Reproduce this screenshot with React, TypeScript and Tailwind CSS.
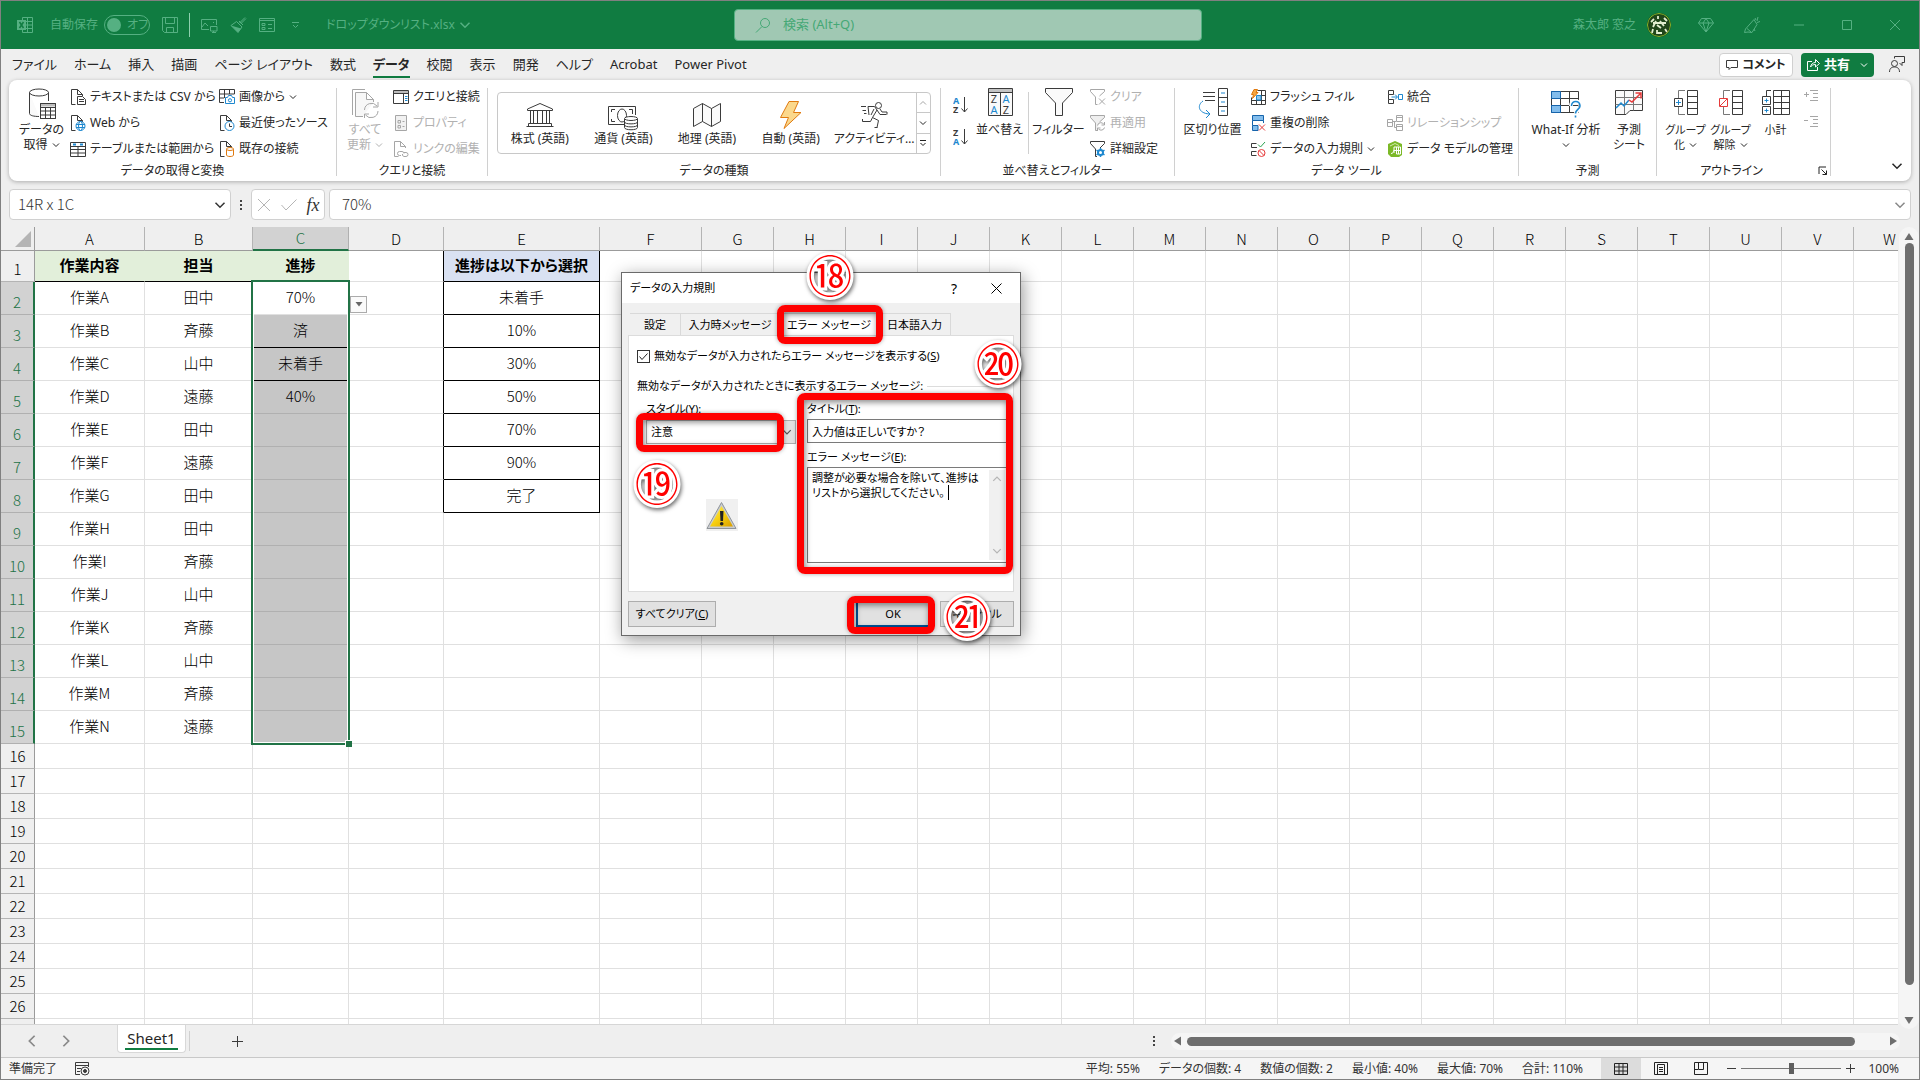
import React, { useState } from "react";
import clsx from "clsx";

const INK = "#3b3b3b";
const BLUE = "#1e88cf";
const GRAY = "#a6a6a6";

const Svg = ({ w, h, children, className }: { w: number; h: number; children: React.ReactNode; className?: string }) => (
  <svg width={w} height={h} viewBox={`0 0 ${w} ${h}`} fill="none" stroke={INK} className={clsx("shrink-0", className)} aria-hidden="true">
    {children}
  </svg>
);

const Chevron = ({ className, size = 8 }: { className?: string; size?: number }) => (
  <svg width={size} height={size} viewBox="0 0 8 8" fill="none" stroke="currentColor" className={clsx("shrink-0", className)} aria-hidden="true">
    <path d="M1 2.5 4 5.5 7 2.5" />
  </svg>
);

const Doc = ({ color = INK }: { color?: string }) => (
  <path d="M5.5 15.5H1.5V.5H7.5L12.5 5.5V7M7.5 .5V5.5H12.5" stroke={color} />
);

const icons: Record<string, React.ReactNode> = {
  csv: (
    <>
      <Doc />
      <path d="M7.5 7.5H12.5L15.5 10.5V15.5H7.5Z" fill="#fff" />
      <path d="M9 10.5H14M9 12.5H14" />
    </>
  ),
  web: (
    <>
      <Doc />
      <circle cx="10.5" cy="11" r="4.5" fill="#fff" stroke={BLUE} />
      <path d="M6 9.5H15M6 12.5H15" stroke={BLUE} />
      <ellipse cx="10.5" cy="11" rx="2" ry="4.5" stroke={BLUE} />
    </>
  ),
  table: (
    <>
      <path d="M.5 1.5H15.5V15.5H.5ZM.5 5.5H15.5M.5 8.5H15.5M.5 12H15.5M8 5.5V15.5" />
      <path d="M3 3.5H6M10 3.5H13" stroke={BLUE} strokeWidth="2" />
    </>
  ),
  picture: (
    <>
      <path d="M.5 .5H15.5V5M.5 .5V13.5H5M.5 5H15.5M.5 9H5M5.5 .5V9M10.5 .5V5" />
      <path d="M6.5 8.5H8.5L9.5 6.5H12.5L13.5 8.5H15.5V14.5H6.5Z" fill="#fff" stroke={BLUE} />
      <circle cx="11" cy="11.3" r="1.6" stroke={BLUE} />
    </>
  ),
  recent: (
    <>
      <Doc />
      <circle cx="10.5" cy="11" r="4.5" fill="#fff" stroke={BLUE} />
      <path d="M10.5 8.5V11.5H13" />
    </>
  ),
  existing: (
    <>
      <Doc />
      <path d="M7.5 8V14C7.5 16 14.5 16 14.5 14V8" fill="#fff" stroke="#e07a10" />
      <ellipse cx="11" cy="8" rx="3.5" ry="1.5" fill="#fff" stroke="#e07a10" />
    </>
  ),
  queries: (
    <>
      <path d="M.5 1.5H15.5V14.5H.5ZM.5 4.5H15.5" />
      <path d="M1 3H15" stroke="#bbb" strokeWidth="2" />
      <path d="M10.5 5V14" />
      <path d="M12 7.5H14.5M12 9.5H14.5M12 11.5H14.5" stroke={BLUE} />
    </>
  ),
  props: (
    <>
      <path d="M2.5 .5H13.5V15.5H2.5Z" fill="#f1f1f1" stroke={GRAY} />
      <path d="M5 5.5H7.5V8H5ZM5 10.5H7.5V13H5Z M9.5 6.5H11.5M9.5 11.5H11.5" stroke={GRAY} />
    </>
  ),
  links: (
    <>
      <Doc color={GRAY} />
      <path d="M8 14.5H6.5A2 2 0 0 1 6.5 10.5H9A2 2 0 0 1 11 12.5M11 11.5H13A2 2 0 0 1 13 15.5H11A2 2 0 0 1 9.500 13" stroke={GRAY} />
    </>
  ),
  clear: <path d="M9.500 7 14.500 2.500V.5H.5V2.500L5.500 8V15.500H7.500M9 9.500 15 15.500M15 9.500 9 15.500" stroke={GRAY} />,
  reapply: (
    <>
      <path d="M9.500 7 14.500 2.500V.5H.5V2.500L5.500 8V15.500H7" stroke={GRAY} fill="#efefef" />
      <path d="M7.500 10.500A3.500 3.500 0 0 1 14 9.500M14.500 7V10H11.500M14.500 12.500A3.500 3.500 0 0 1 8.500 14M7.500 16V13H10.500" stroke={GRAY} />
    </>
  ),
  advanced: (
    <>
      <path d="M10 7 14.500 2.500V.5H.5V2.500L5.500 8V15.500H7" />
      <circle cx="10.500" cy="11.500" r="2.500" stroke={BLUE} strokeWidth="2" />
      <path d="M10.500 7V9M10.500 14V16M6.500 9.200 8.500 10.300M12.500 12.700 14.500 13.800M14.500 9.200 12.500 10.300M8.500 12.700 6.500 13.800" stroke={BLUE} strokeWidth="1.500" />
    </>
  ),
  flash: (
    <>
      <path d="M7.500 1.500H15.500V15.500H1.500V8.500M1.500 11.500H15.500M11.500 1.500V15.500M6.500 8V15.500M7 6.500H15.500" />
      <path d="M6.500 6.500H11V11H6.500Z" stroke={BLUE} fill="#8fc6ee" />
      <path d="M4 .5H7.500L6 3.500H8L2.500 9.500 3.500 5.500H1.500Z" fill="#f5a742" stroke="#e07a10" />
    </>
  ),
  dedupe: (
    <>
      <path d="M2.500 .5H13.500V5.500H2.500ZM2.500 10.500H8V15.500H2.500Z" fill="#83bdec" stroke="#1664ab" />
      <path d="M2.500 5.500V10.500M13.500 5.500V8" stroke="#1664ab" />
      <path d="M9 9.500 15 15.500M15 9.500 9 15.500" stroke="#e63a3a" />
    </>
  ),
  validate: (
    <>
      <path d="M6.500 2.500H1.500V6.500H7M6.500 10.500H1.500V14.500H6.500" />
      <path d="M8 3.500 10.500 6 15 1" stroke="#2ca350" />
      <circle cx="11.500" cy="12" r="3.500" stroke="#e63a3a" />
      <path d="M9 9.500 14 14.500" stroke="#e63a3a" />
    </>
  ),
  consolidate: (
    <>
      <path d="M1.500 1.500H6.500V5.500H1.500ZM1.500 10.500H6.500V14.500H1.500ZM1.500 5.500V10.500" />
      <path d="M4.500 8H10M8 5.500 10.500 8 8 10.500M11.500 5.500H15.500V10.500H11.500Z" stroke={BLUE} />
    </>
  ),
  relation: <path d="M.5 4.500H5.500V11.500H.5ZM.5 7.500H5.500M9.500 .5H15.500V6.500H9.500ZM9.500 2.500H15.500M9.500 9.500H15.500V15.500H9.500ZM9.500 11.500H15.500M5.500 6.500H9M7.500 6.500V12.500H9" stroke={GRAY} />,
  model: (
    <>
      <path d="M1 3 8 0 15 3V14L12 16H4L1 13Z" fill="#7cb928" stroke="none" />
      <path d="M7 12V6H13.500V13H9.500M9.500 6V13M11.500 6V13M7 9.500H13.500M4 12.500C6 12.500 6.500 11 6.500 9.500" stroke="#fff" />
      <path d="M3 5 8 2.500 12 4.500" stroke="#d3ecae" />
    </>
  ),
};

const SmallIcon = ({ name }: { name: string }) => (
  <Svg w={16} h={16}>
    {icons[name]}
  </Svg>
);

const SmallButton = ({ icon, text, disabled, chevron }: { icon: string; text: string; disabled?: boolean; chevron?: boolean }) => (
  <button type="button" disabled={disabled} className={clsx("flex h-[26px] items-center gap-1 whitespace-nowrap", disabled && "text-[#b1b1b1]")}>
    <SmallIcon name={icon} />
    <span>{text}</span>
    {chevron && <Chevron />}
  </button>
);

const BigButton = ({ icon, lines, chevron, disabled, className }: { icon: React.ReactNode; lines: string[]; chevron?: boolean; disabled?: boolean; className: string }) => (
  <button type="button" disabled={disabled} className={clsx("flex shrink-0 flex-col items-center pt-1 leading-[15px]", className, disabled && "text-[#b1b1b1]")}>
    <span className="mb-0.5 flex h-8 items-start">{icon}</span>
    {lines.map((line, i) => (
      <span key={line} className="flex items-center gap-1 whitespace-nowrap">
        {line}
        {chevron && i === lines.length - 1 && lines.length > 1 && <Chevron />}
      </span>
    ))}
    {chevron && lines.length === 1 && <Chevron className="mt-1" />}
  </button>
);

const Group = ({ label, className, children, launcher }: { label: string; className: string; children: React.ReactNode; launcher?: boolean }) => (
  <>
    <section aria-label={label} className={clsx("flex shrink-0 flex-col", className)}>
      <div className="flex h-[78px]">{children}</div>
      <div className="flex h-[18px] items-center">
        {launcher && <span className="w-3" />}
        <span className={clsx("flex-1 text-center", launcher && "-ml-6")}>{label}</span>
        {launcher && (
          <button type="button" aria-label="アウトラインの設定" className="pr-0.5">
            <Svg w={10} h={10}>
              <path d="M1 8V1H8M3.500 3.500 8.500 8.500M8.500 4.500V8.500H4.500" stroke="#222" />
            </Svg>
          </button>
        )}
      </div>
    </section>
    <div className="my-1 w-px shrink-0 bg-[#d0d0d0]" />
  </>
);

const DataGetIcon = () => (
  <Svg w={28} h={31}>
    <path d="M1.500 4.500V25.500C1.500 27.500 6 28.500 11 28.500M20.500 4.500V13" fill="#fafafa" />
    <ellipse cx="11" cy="4.500" rx="9.500" ry="3.500" />
    <path d="M12.500 15.500H27.500V30.500H12.500Z" fill="#fff" />
    <path d="M13 17H27" stroke="#bdbdbd" strokeWidth="3" />
    <path d="M12.500 15.500H27.500V30.500H12.500ZM12.500 19.500H27.500M12.500 23H27.500M12.500 27H27.500M17.500 19V30.500M22.500 19V30.500" />
  </Svg>
);

const RefreshIcon = () => (
  <Svg w={28} h={31}>
    <g stroke={GRAY}>
      <path d="M1.500 27V1.500H14" />
      <path d="M12 28.500H4.500V4.500H15.500L22.500 11.500V14M15.500 4.500V11.500H22.500" fill="#f7f7f7" />
      <path d="M13.500 22A7 7 0 0 1 26 18M27 14V19H22M27 23A7 7 0 0 1 14.500 27M13.500 30V26H18" />
    </g>
  </Svg>
);

const sortLetters = (first: string, second: string) => (
  <Svg w={16} h={18}>
    <text x="0" y="8" fontSize="9" fontWeight="700" stroke="none" fill={first === "A" ? BLUE : INK} fontFamily="Noto Sans">{first}</text>
    <text x="0" y="17" fontSize="9" fontWeight="700" stroke="none" fill={second === "A" ? BLUE : INK} fontFamily="Noto Sans">{second}</text>
    <path d="M11.500 1V16M8.500 12.500 11.500 16 14.500 12.500" />
  </Svg>
);

const SortIcon = () => (
  <Svg w={28} h={28}>
    <path d="M2.500 .5H26.500V27.500H2.500Z" fill="#fafafa" />
    <path d="M3 2.500H26" stroke="#c4c4c4" strokeWidth="3" />
    <path d="M2.500 4.500H26.500M14.500 4.500V27.500" />
    <g fontSize="11" stroke="none" fontFamily="Noto Sans" textAnchor="middle">
      <text x="8" y="15" fill={INK}>Z</text>
      <text x="8" y="26" fill={BLUE}>A</text>
      <text x="20" y="15" fill={BLUE}>A</text>
      <text x="20" y="26" fill={INK}>Z</text>
    </g>
  </Svg>
);

const FilterIcon = () => (
  <Svg w={28} h={29}>
    <path d="M.5 .5H27.500V4.500L17.500 15V27.500H10.500V15L.5 4.500Z" fill="#fafafa" />
  </Svg>
);

const SplitIcon = () => (
  <Svg w={30} h={30}>
    <path d="M20.500 .5H29.500V27.500H20.500ZM20.500 9.500H29.500M20.500 18.500H29.500M5 4.500H17M5 8.500H17M7 12.500H17" />
    <path d="M23 5H27M23 14H27M23 23H27" stroke={BLUE} />
    <path d="M5 13C-1 17 0 25 11 26M8 22 12 26 8 30" stroke={BLUE} />
  </Svg>
);

const WhatIfIcon = () => (
  <Svg w={30} h={30}>
    <path d="M.5 3.500H27.500V24.500H.5ZM.5 10.500H27.500M.5 17.500H27.500M9.500 3.500V24.500M18.500 3.500V24.500" />
    <path d="M.5 3.500H9.500V10.500H.5ZM.5 17.500H9.500V24.500H.5Z" fill="#83bdec" stroke="#1664ab" />
    <path d="M20 18C20 11 29.500 12 29.500 18C29.500 22 25 21 25 26" stroke="#fff" strokeWidth="4" />
    <path d="M20.500 18C20.500 12 29 12 29 18C29 21.500 24.500 21.500 24.500 25.500M24.500 27.500V29.500" stroke={BLUE} strokeWidth="1.600" />
  </Svg>
);

const ForecastIcon = () => (
  <Svg w={28} h={28}>
    <path d="M.5 2.500H27.500V22.500H15L11 26.500H.5Z" fill="#fafafa" />
    <path d="M.5 9.500H27.500M.5 16.500H27.500M9.500 2.500V26M18.500 2.500V22.500" stroke="#777" />
    <path d="M1 20 6 15 9 18 14 12" stroke={BLUE} strokeWidth="1.500" />
    <path d="M14 12 17 14 26 5M20.500 5H26V10.500" stroke="#e63a3a" strokeWidth="1.500" />
  </Svg>
);

const OutlineIcon = ({ kind }: { kind: "group" | "ungroup" | "subtotal" }) => {
  if (kind === "subtotal") {
    return (
      <Svg w={28} h={28}>
        <path d="M11.500 2.500H27.500V26.500H11.500ZM11.500 8.500H27.500M11.500 14.500H27.500M11.500 20.500H27.500M19.500 2.500V26.500" />
        <path d="M9 2.500H4.500V8" />
        <path d="M.5 8.500H8.500V16.500H.5ZM.5 18.500H8.500V26.500H.5Z" fill="#fff" />
        <path d="M2.500 12.500H6.500M4.500 10.500V14.500M2.500 22.500H6.500M4.500 20.500V24.500" stroke={BLUE} />
      </Svg>
    );
  }
  const un = kind === "ungroup";
  return (
    <Svg w={24} h={28}>
      <path d="M13.500 2.500H23.500V26.500H13.500ZM13.500 8.500H23.500M13.500 14.500H23.500M13.500 20.500H23.500" />
      <path d="M11 2.500H4.500V10M4.500 19V26.500H11" stroke="#777" />
      <path d="M.5 10.500H8.500V18.500H.5Z" fill="#fff" stroke={un ? "#e63a3a" : INK} />
      {un ? <path d="M1 18 8 11" stroke="#e63a3a" /> : <path d="M2 14.500H7M4.500 12V17" stroke={BLUE} />}
    </Svg>
  );
};

const galleryItems = [
  {
    text: "株式 (英語)",
    icon: (
      <Svg w={28} h={30}>
        <path d="M1.500 9.500V8L14 2.500 26.500 8V9.500ZM.5 25.500H27.500M2.500 22.500H25.500V25M2.500 22.500V25M4.500 10V22.500M7.500 10V22.500M11.500 10V22.500M16.500 10V22.500M20.500 10V22.500M23.500 10V22.500" />
      </Svg>
    ),
  },
  {
    text: "通貨 (英語)",
    icon: (
      <Svg w={30} h={30}>
        <path d="M16 23.500H.5V5.500H27.500V14M3.500 11V8.500H7M21 8.500H24.500V13M3.500 18V20.500H7" />
        <ellipse cx="14" cy="14.500" rx="4.500" ry="6.500" />
        <path d="M16.500 18V26.500C16.500 29.500 29.500 29.500 29.500 26.500V18" fill="#fff" />
        <ellipse cx="23" cy="17.500" rx="6.500" ry="2" fill="#fff" />
        <path d="M16.500 21C16.500 23.500 29.500 23.500 29.500 21M16.500 24C16.500 26.500 29.500 26.500 29.500 24" />
      </Svg>
    ),
  },
  {
    text: "地理 (英語)",
    icon: (
      <Svg w={28} h={30}>
        <path d="M.5 7.500 9.500 2.500 18.500 7.500 27.500 2.500V20.500L18.500 25.500 9.500 20.500 .5 25.500ZM9.500 2.500V20.500M18.500 7.500V25.500" fill="#fafafa" />
      </Svg>
    ),
  },
  {
    text: "自動 (英語)",
    icon: (
      <Svg w={24} h={30}>
        <path d="M10 .5H19.500L14.500 11.500H22L5 27.500 9.500 16.500H1.500Z" fill="#fbd88c" stroke="#e07a10" />
      </Svg>
    ),
  },
  {
    text: "アクティビティ…",
    icon: (
      <Svg w={28} h={30}>
        <circle cx="18.500" cy="4.500" r="3" />
        <path d="M8 5.500H14.500L17 9 20 13.500H26.500M8 5.500 9 14M17 9 12.500 16.500 18.500 19.500 17 26.500M12.500 16.500 10.500 20.500H2.500V18M14 8 11 14M20 8 22 11H27V13.500M14.500 26.500H17.500M1 5.500H6M2.500 9.500H6M4 12.500H6.500" />
      </Svg>
    ),
  },
];

const Ribbon = () => (
  <div className="mx-2 flex rounded-lg bg-white pt-1 pb-px text-[12px] text-[#262626] shadow-[0_1px_4px_rgba(0,0,0,0.28)]">
    <Group label="データの取得と変換" className="w-[327px]">
      <BigButton className="ml-1 w-[57px]" icon={<DataGetIcon />} lines={["データの", "取得"]} chevron />
      <div className="w-[149px]">
        <SmallButton icon="csv" text="テキストまたは CSV から" />
        <SmallButton icon="web" text="Web から" />
        <SmallButton icon="table" text="テーブルまたは範囲から" />
      </div>
      <div>
        <SmallButton icon="picture" text="画像から" chevron />
        <SmallButton icon="recent" text="最近使ったソース" />
        <SmallButton icon="existing" text="既存の接続" />
      </div>
    </Group>
    <Group label="クエリと接続" className="w-[150px]">
      <BigButton className="w-14" icon={<RefreshIcon />} lines={["すべて", "更新"]} chevron disabled />
      <div>
        <SmallButton icon="queries" text="クエリと接続" />
        <SmallButton icon="props" text="プロパティ" disabled />
        <SmallButton icon="links" text="リンクの編集" disabled />
      </div>
    </Group>
    <Group label="データの種類" className="w-[452px]">
      <div className="mx-[9px] my-2 flex flex-1 rounded border border-[#c8c8c8]">
        {galleryItems.map((item) => (
          <button key={item.text} type="button" className="flex w-0 flex-1 flex-col items-center pt-2 leading-4 whitespace-nowrap">
            {item.icon}
            {item.text}
          </button>
        ))}
        <div className="flex w-[14px] flex-col divide-y divide-[#c8c8c8] border-l border-[#c8c8c8]">
          <button type="button" aria-label="前の行" className="flex flex-1 items-center justify-center text-[#a6a6a6]"><Chevron className="rotate-180" /></button>
          <button type="button" aria-label="次の行" className="flex flex-1 items-center justify-center"><Chevron /></button>
          <button type="button" aria-label="その他" className="flex flex-1 items-center justify-center">
            <Svg w={8} h={8}><path d="M1 1.500H7M1.500 4 4 6.500 6.500 4" stroke="#222" /></Svg>
          </button>
        </div>
      </div>
    </Group>
    <Group label="並べ替えとフィルター" className="w-[233px]">
      <div className="ml-3 flex w-[18px] flex-col gap-[14px] pt-3">
        <button type="button" aria-label="昇順">{sortLetters("A", "Z")}</button>
        <button type="button" aria-label="降順">{sortLetters("Z", "A")}</button>
      </div>
      <BigButton className="w-[57px]" icon={<SortIcon />} lines={["並べ替え"]} />
      <div className="my-2 w-px bg-[#d0d0d0]" />
      <BigButton className="w-[59px]" icon={<FilterIcon />} lines={["フィルター"]} />
      <div className="ml-0.5">
        <SmallButton icon="clear" text="クリア" disabled />
        <SmallButton icon="reapply" text="再適用" disabled />
        <SmallButton icon="advanced" text="詳細設定" />
      </div>
    </Group>
    <Group label="データ ツール" className="w-[343px]">
      <BigButton className="ml-1 w-[67px]" icon={<SplitIcon />} lines={["区切り位置"]} />
      <div className="ml-1 w-[137px]">
        <SmallButton icon="flash" text="フラッシュ フィル" />
        <SmallButton icon="dedupe" text="重複の削除" />
        <SmallButton icon="validate" text="データの入力規則" chevron />
      </div>
      <div>
        <SmallButton icon="consolidate" text="統合" />
        <SmallButton icon="relation" text="リレーションシップ" disabled />
        <SmallButton icon="model" text="データ モデルの管理" />
      </div>
    </Group>
    <Group label="予測" className="w-[137px]">
      <BigButton className="ml-1.5 w-[82px]" icon={<WhatIfIcon />} lines={["What-If 分析"]} chevron />
      <BigButton className="w-11" icon={<ForecastIcon />} lines={["予測", "シート"]} />
    </Group>
    <Group label="アウトライン" className="w-[173px]" launcher>
      <div className="ml-1.5 flex text-[11px]">
        <BigButton className="w-[45px]" icon={<OutlineIcon kind="group" />} lines={["グループ", "化"]} chevron />
        <BigButton className="w-[45px]" icon={<OutlineIcon kind="ungroup" />} lines={["グループ", "解除"]} chevron />
        <BigButton className="w-[45px]" icon={<OutlineIcon kind="subtotal" />} lines={["小計"]} />
      </div>
      <div className="ml-1.5 flex flex-col gap-[14px] pt-1.5">
        <button type="button" aria-label="詳細データの表示">
          <Svg w={16} h={12}><path d="M0 4.500H5M2.500 2V7M6 .5H14M9 3.500H14M9 7.500H14M6 10.500H14" stroke={GRAY} /></Svg>
        </button>
        <button type="button" aria-label="詳細を表示しない">
          <Svg w={16} h={12}><path d="M0 4.500H4M6 .5H14M9 3.500H14M9 7.500H14M6 10.500H14" stroke={GRAY} /></Svg>
        </button>
      </div>
    </Group>
    <div className="flex flex-1 items-end justify-end pr-2 pb-2">
      <button type="button" aria-label="リボンを折りたたむ"><Chevron size={12} /></button>
    </div>
  </div>
);

const TitleBar = () => (
  <header className="flex h-12 shrink-0 items-center bg-[#107c41] pl-4 text-[12px] text-[#55b082]">
    <div className="flex flex-1 items-center">
      <Svg w={17} h={16} className="text-[#55b082]">
        <g stroke="currentColor">
          <path d="M5.500 3V.5H15.500V15.500H5.500V13M9 4.500H15.500M9 8H15.500M9 11.500H15.500M10.500 .5V15.500" />
          <path d="M0 3H9V13H0Z" fill="currentColor" stroke="none" />
          <path d="M2.500 5 6.500 11M6.500 5 2.500 11" stroke="#107c41" strokeWidth="1.500" />
        </g>
      </Svg>
      <span className="ml-4">自動保存</span>
      <button type="button" role="switch" aria-checked="false" className="ml-1.5 flex h-5 w-[46px] items-center gap-1.5 rounded-full border border-current pl-0.5">
        <span className="size-[14px] rounded-full bg-current" />
        オフ
      </button>
      <button type="button" aria-label="上書き保存" className="ml-3">
        <Svg w={16} h={16}><path d="M.5 .5H15.500V15.500H2.500L.5 13.500ZM3.500 .5V6.500H12.500V.5M4.500 15V10.500H11.500V15" stroke="#55b082" /></Svg>
      </button>
      <div className="mx-[11px] h-6 w-px bg-[#8fd0ae]" />
      <button type="button" aria-label="画面">
        <Svg w={17} h={16}><path d="M8 12.500H.5V2.500H15.500V8M1 10 4 6 7 9M9.500 9.500H16V14H9.500ZM12.500 14V16M11 15.500H15M12 5.500H13" stroke="#55b082" /></Svg>
      </button>
      <button type="button" aria-label="書式のコピー" className="ml-3">
        <Svg w={17} h={16}><path d="M15 .5 9.500 6M1 8.500 6.500 4.500 12 10 8 15.500Z M9 4 13 8M16 1.500 11 6.500" stroke="#55b082" /><path d="M1 8.500 11 11.500 8 15.500Z" fill="#55b082" stroke="none" /></Svg>
      </button>
      <button type="button" aria-label="フォーム" className="ml-3">
        <Svg w={16} h={16}><path d="M.5 1.500H15.500V14.500H.5ZM.5 3.500H15.500M3 6.500H6V8.500H3ZM3 10.500H6V12.500H3ZM9 7.500H13M9 11.500H13" stroke="#55b082" /></Svg>
      </button>
      <button type="button" aria-label="クイック アクセス ツール バーのカスタマイズ" className="ml-4">
        <Svg w={9} h={8}><path d="M1 1.500H8M2 4 4.500 6.500 7 4" stroke="#55b082" /></Svg>
      </button>
      <button type="button" className="ml-[26px] flex items-center gap-1 text-[12px] whitespace-nowrap">
        ドロップダウンリスト.xlsx
        <Chevron size={12} />
      </button>
    </div>
    <label className="flex h-8 w-[468px] items-center rounded-sm border border-[#55b082] bg-[#a0c8b3] pl-5">
      <Svg w={16} h={16}>
        <circle cx="10" cy="6" r="4.500" stroke="#45a876" />
        <path d="M7 9.500 1 15.500" stroke="#45a876" />
      </Svg>
      <input type="text" aria-label="検索" placeholder="検索 (Alt+Q)" className="ml-3 flex-1 bg-transparent text-[13px] outline-none placeholder:text-[#45a876]" />
    </label>
    <div className="flex flex-1 items-center justify-end">
      <span>森太郎 窓之</span>
      <span className="ml-[11px] flex size-6 items-center justify-center overflow-hidden rounded-full bg-[#20461a]">
        <Svg w={24} h={24}>
          <g stroke="#e2eed0" strokeWidth="1.800">
            <path d="M4 9 7 6M11 3V6M6 10H19M17 5 20 8M9 8 6 14M13 8 17 13M10 12 14 15M5 20 6 16M10 17V20H15M18 16 20 19" />
          </g>
          <circle cx="12" cy="12" r="11.500" stroke="#8ab82a" />
        </Svg>
      </span>
      <button type="button" aria-label="プレミアム" className="ml-[27px]">
        <Svg w={16} h={16}><path d="M3.500 1.500H12.500L15.500 6 8 15 .5 6ZM.5 6H15.500M5 6 8 1.500 11 6 8 15Z" stroke="#55b082" /></Svg>
      </button>
      <button type="button" aria-label="描画" className="ml-[30px]">
        <Svg w={16} h={16}><path d="M10 2.500 1.500 12 .5 15.500 4 15 8 15.500 13 7.500ZM3 11.500 7 15M10 12 11 14M11 1 12 3M14 0 13 4M16 4.500 13 5.500" stroke="#55b082" /></Svg>
      </button>
      <button type="button" aria-label="最小化" className="ml-[34px]">
        <Svg w={10} h={10}><path d="M0 5H10" stroke="#55b082" /></Svg>
      </button>
      <button type="button" aria-label="最大化" className="ml-[38px]">
        <Svg w={10} h={10}><path d="M.5 .5H9.500V9.500H.5Z" stroke="#55b082" /></Svg>
      </button>
      <button type="button" aria-label="閉じる" className="mr-[19px] ml-[38px]">
        <Svg w={10} h={10}><path d="M0 0 10 10M10 0 0 10" stroke="#55b082" /></Svg>
      </button>
    </div>
  </header>
);

const tabs = ["ファイル", "ホーム", "挿入", "描画", "ページ レイアウト", "数式", "データ", "校閲", "表示", "開発", "ヘルプ", "Acrobat", "Power Pivot"];

const TabRow = () => (
  <nav className="flex h-[31px] shrink-0 items-center pr-[14px] pl-[11px] text-[13px] text-[#262626]">
    <div className="flex flex-1 gap-[17px]">
      {tabs.map((tab) => (
        <button key={tab} type="button" className={clsx("border-b-2 leading-6 whitespace-nowrap", tab === "データ" ? "border-[#107c41] font-bold" : "border-transparent")}>
          {tab}
        </button>
      ))}
    </div>
    <button type="button" className="flex h-6 w-[74px] items-center justify-center gap-1 rounded border border-[#d0d0d0] bg-white text-[12px] font-bold">
      <Svg w={12} h={12}><path d="M.5 1.500H11.500V8.500H5L3 10.500V8.500H.5Z" /></Svg>
      コメント
    </button>
    <button type="button" className="ml-2 flex h-6 w-[73px] items-center justify-center gap-1 rounded bg-[#107c41] text-[13px] font-bold text-white">
      <Svg w={13} h={13}><path d="M5 3.500H.5V12.500H10.500V9M3.500 9C4 6 6 4.500 8.500 4.500V1.500L12.500 5.500 8.500 9V6.500C6 6.500 4.500 7.500 3.500 9Z" stroke="#fff" /></Svg>
      共有
      <Chevron className="ml-1.5" />
    </button>
    <button type="button" aria-label="アカウント" className="ml-[15px]">
      <Svg w={16} h={17}><circle cx="5.500" cy="7.500" r="3" /><path d="M.5 16C.5 12 3 11 5.500 11S10.500 12 10.500 16M5.500 2.500V.5H15.500V6.500H13V9.500L10.500 7" /></Svg>
    </button>
  </nav>
);

const FormulaBar = () => (
  <div className="mx-2 mt-2 flex h-[31px] shrink-0 font-['Noto_Sans_CJK_JP',sans-serif] text-[15px] text-[#333]">
    <div className="flex w-[222px] items-center rounded border border-[#d0d0d0] bg-white pr-1">
      <input aria-label="名前ボックス" defaultValue="14R x 1C" className="min-w-0 flex-1 bg-transparent pl-2 font-light outline-none" />
      <Chevron size={12} />
    </div>
    <div className="flex w-5 flex-col items-center justify-center gap-0.5">
      <span className="size-0.5 bg-[#444]" />
      <span className="size-0.5 bg-[#444]" />
      <span className="size-0.5 bg-[#444]" />
    </div>
    <div className="flex w-[74px] items-center justify-center gap-2.5 rounded border border-[#d0d0d0] bg-white">
      <button type="button" aria-label="キャンセル"><Svg w={14} h={14}><path d="M1 1 13 13M13 1 1 13" stroke="#b5b5b5" /></Svg></button>
      <button type="button" aria-label="入力"><Svg w={16} h={14}><path d="M.5 7 5 12 15.500 1.500" stroke="#b5b5b5" /></Svg></button>
      <button type="button" aria-label="関数の挿入" className="font-['Liberation_Serif',serif] text-[18px] leading-5 italic">fx</button>
    </div>
    <div className="ml-1 flex flex-1 items-center rounded border border-[#d0d0d0] bg-white pr-1">
      <input aria-label="数式バー" defaultValue="70%" className="min-w-0 flex-1 bg-transparent pl-3 font-light outline-none" />
      <Chevron size={12} className="text-[#888]" />
    </div>
  </div>
);

const columns = "ABCDEFGHIJKLMNOPQRSTUVW".split("");
const columnWidths: Record<string, string> = { A: "w-[110px]", B: "w-[108px]", C: "w-[96px]", D: "w-[95px]", E: "w-[156px]", F: "w-[102px]" };
const people = ["田中", "斉藤", "山中", "遠藤", "田中", "遠藤", "田中", "田中", "斉藤", "山中", "斉藤", "山中", "斉藤", "遠藤"];
const progress = ["70%", "済", "未着手", "40%"];
const choices = ["未着手", "10%", "30%", "50%", "70%", "90%", "完了"];

const cellText = (col: string, row: number) => {
  if (row === 1) return { A: "作業内容", B: "担当", C: "進捗", E: "進捗は以下から選択" }[col];
  if (row > 15) return undefined;
  if (col === "A") return "作業" + "ABCDEFGHIJKLMN"[row - 2];
  if (col === "B") return people[row - 2];
  if (col === "C") return progress[row - 2];
  if (col === "E") return choices[row - 2];
  return undefined;
};

const cellStyle = (col: string, row: number) => {
  const green = row === 1 && "ABC".includes(col);
  const selected = col === "C" && row > 1 && row < 16;
  return clsx(
    "border-r border-b p-0 pb-0.5 text-center leading-5 whitespace-nowrap",
    row === 1 ? "font-bold" : "font-light",
    green && "border-r-[#e2efda] bg-[#e2efda]",
    row === 1 && col === "E" && "bg-[#d9e1f2]",
    selected && row > 2 && "bg-[#c6c6c6]",
    col === "E" && row < 9 && "border-r-black",
    col === "D" && row < 9 && "border-r-black",
    !green && !(col === "E" && row < 9) && !(col === "D" && row < 9) && "border-r-[#e0e0e0]",
    (green && col !== "C") || (col === "E" && row < 9) || (col === "C" && (row === 3 || row === 4))
      ? "border-b-black"
      : selected && row > 2
        ? "border-b-[#b0b0b0]"
        : "border-b-[#e0e0e0]"
  );
};

const Sheet = () => (
  <div className="mt-[7px] flex min-h-0 flex-1">
    <div className="relative min-w-0 flex-1 overflow-hidden border-b border-[#d6d6d6]">
      <table className="w-[1890px] table-fixed border-separate border-spacing-0 bg-white font-['Noto_Sans_CJK_JP',sans-serif] text-[15px] text-black">
        <thead>
          <tr className="h-6">
            <th aria-label="すべて選択" className="w-[34px] border-r border-b border-[#9b9b9b] bg-[#efefef] p-0">
              <Svg w={16} h={16} className="mr-[3px] ml-auto"><path d="M16 0V16H0Z" fill="#b4b4b4" stroke="none" /></Svg>
            </th>
            {columns.map((col) => (
              <th
                key={col}
                scope="col"
                className={clsx(
                  "p-0 leading-5 font-light",
                  columnWidths[col] ?? "w-[72px]",
                  col === "C" ? "border-r border-b-2 border-r-[#b0b0b0] border-b-[#217346] bg-[#d2d2d2] text-[#217346]" : "border-r border-b border-r-[#b4b4b4] border-b-[#9b9b9b] bg-[#efefef]"
                )}
              >
                {col}
              </th>
            ))}
          </tr>
        </thead>
        <tbody>
          {Array.from({ length: 27 }, (_, i) => i + 1).map((row) => {
            const selected = row > 1 && row < 16;
            return (
              <tr key={row} className={row === 1 ? "h-[31px]" : selected ? "h-[33px]" : "h-[25px]"}>
                <th
                  scope="row"
                  className={clsx(
                    "border-b p-0 align-bottom leading-6 font-light",
                    selected ? "border-r-2 border-r-[#217346] border-b-[#b0b0b0] bg-[#d2d2d2] text-[#217346]" : "border-r border-r-[#9b9b9b] border-b-[#b4b4b4] bg-[#efefef]"
                  )}
                >
                  {row}
                </th>
                {columns.map((col) => (
                  <td key={col} className={cellStyle(col, row)}>
                    {cellText(col, row)}
                  </td>
                ))}
              </tr>
            );
          })}
        </tbody>
      </table>
      {/* selection frame for C2:C15 with its fill handle */}
      <div className="absolute top-[53px] left-[250px] h-[465px] w-[99px] border-2 border-[#217346]">
        <div className="h-full border border-white" />
        <span className="absolute -right-1 -bottom-1 size-[7px] border-t border-l border-white bg-[#217346]" />
      </div>
      <button type="button" aria-label="リストを開く" className="absolute top-[69px] left-[349px] flex h-[17px] w-[17px] items-center justify-center border border-[#ababab] bg-[#fafafa]">
        <Svg w={8} h={5}><path d="M.5 0H7.500L4 4.500Z" fill="#666" stroke="none" /></Svg>
      </button>
    </div>
    <div className="-mb-1 ml-px flex w-5 flex-col items-center rounded-full bg-[#f5f5f5] pb-1">
      <Svg w={10} h={16}><path d="M5 6 9.500 13H.5Z" fill="#6e6e6e" stroke="none" /></Svg>
      <div className="mb-[30px] w-[9px] flex-1 rounded-full bg-[#6e6e6e]" />
      <Svg w={10} h={10}><path d="M5 9 .5 2H9.500Z" fill="#6e6e6e" stroke="none" /></Svg>
    </div>
  </div>
);

const SheetBar = () => (
  <div className="flex h-8 shrink-0 items-center">
    <button type="button" aria-label="前のシート" className="ml-6 text-[#8a8a8a]"><Chevron size={14} className="rotate-90" /></button>
    <button type="button" aria-label="次のシート" className="ml-5 text-[#8a8a8a]"><Chevron size={14} className="-rotate-90" /></button>
    <button type="button" className="ml-11 flex h-7 w-[69px] justify-center self-start rounded-b border border-t-0 border-[#d8d8d8] bg-white text-[15px] text-[#262626]">
      <span className="h-[25px] border-b-2 border-[#107c41] px-0.5 leading-[26px]">Sheet1</span>
    </button>
    <div className="ml-[3px] h-5 w-px bg-[#d0d0d0]" />
    <button type="button" aria-label="新しいシート" className="ml-[42px]"><Svg w={11} h={11}><path d="M0 5.500H11M5.500 0V11" /></Svg></button>
    <div className="flex-1" />
    <div className="flex flex-col gap-0.5">
      <span className="size-0.5 bg-[#444]" />
      <span className="size-0.5 bg-[#444]" />
      <span className="size-0.5 bg-[#444]" />
    </div>
    <div className="mr-[19px] ml-4 flex h-[17px] w-[38%] items-center justify-between rounded-full bg-[#f5f5f5] px-[3px]">
      <Svg w={8} h={10}><path d="M0 5 7 .5V9.500Z" fill="#6e6e6e" stroke="none" /></Svg>
      <div className="mr-[34px] ml-[5px] h-[9px] flex-1 rounded-full bg-[#6e6e6e]" />
      <Svg w={8} h={10}><path d="M8 5 1 .5V9.500Z" fill="#6e6e6e" stroke="none" /></Svg>
    </div>
  </div>
);

const stats = ["平均: 55%", "データの個数: 4", "数値の個数: 2", "最小値: 40%", "最大値: 70%", "合計: 110%"];

const StatusBar = () => {
  const [zoom, setZoom] = useState(100);
  return (
    <footer className="flex h-[22px] shrink-0 items-center border-t border-[#c8c8c8] bg-[#f5f5f5] pr-5 pl-2 text-[12px] text-[#333]">
      <span>準備完了</span>
      <button type="button" aria-label="マクロの記録" className="ml-[18px]">
        <Svg w={15} h={14}><path d="M5 12.500H.5V.5H13.500V5M.5 3.500H13.500M2 6.500H6M2 9.500H5" /><circle cx="10" cy="9" r="4" /><circle cx="10" cy="9" r="1.500" fill={INK} /></Svg>
      </button>
      <div className="flex flex-1 justify-end gap-[19px]">
        {stats.map((stat) => (
          <span key={stat} className="whitespace-nowrap">{stat}</span>
        ))}
      </div>
      <button type="button" aria-label="標準" className="ml-[18px] flex h-full w-10 items-center justify-center bg-[#dcdcdc]">
        <Svg w={14} h={14}><path d="M.5 1.500H13.500V12.500H.5ZM.5 5H13.500M.5 9H13.500M5 1.500V12.500M9 1.500V12.500" stroke="#222" /></Svg>
      </button>
      <button type="button" aria-label="ページ レイアウト" className="flex w-10 justify-center">
        <Svg w={14} h={14}><path d="M.5 .5H13.500V12.500H.5ZM3.500 2.500H10.500V12.500M3.500 2.500V12.500M5 5.500H9M5 7.500H9M5 9.500H9" stroke="#222" /></Svg>
      </button>
      <button type="button" aria-label="改ページ プレビュー" className="flex w-10 justify-center">
        <Svg w={14} h={14}><path d="M.5 .5H13.500V12.500H.5ZM4.500 .5V7.500H9.500V.5M.5 7.500H4" stroke="#222" /></Svg>
      </button>
      <button type="button" aria-label="縮小" className="ml-1.5"><Svg w={9} h={9}><path d="M0 4.500H9" /></Svg></button>
      <input
        type="range"
        aria-label="ズーム"
        min={0}
        max={200}
        value={zoom}
        onChange={(e) => setZoom(Number(e.target.value))}
        className="mx-[5px] h-3 w-[100px] appearance-none bg-[linear-gradient(#777,#777)] bg-[length:100%_1px] bg-center bg-no-repeat [&::-webkit-slider-thumb]:h-[11px] [&::-webkit-slider-thumb]:w-[5px] [&::-webkit-slider-thumb]:appearance-none [&::-webkit-slider-thumb]:bg-[#5f5f5f]"
      />
      <button type="button" aria-label="拡大"><Svg w={9} h={9}><path d="M0 4.500H9M4.500 0V9" /></Svg></button>
      <span className="ml-3 w-8 text-right">{zoom}%</span>
    </footer>
  );
};

const dialogTabs = [
  { text: "設定", width: "w-[51px]" },
  { text: "入力時メッセージ", width: "w-[99px]" },
  { text: "エラー メッセージ", width: "w-[99px]" },
  { text: "日本語入力", width: "w-[72px]" },
];

const Highlight = ({ className }: { className: string }) => (
  <div className={clsx("pointer-events-none absolute rounded-lg border-[7px] border-[#f00] shadow-[0_0_4px_rgba(0,0,0,0.35),inset_1px_2px_6px_rgba(0,0,0,0.5)]", className)} />
);

const Step = ({ mark, className }: { mark: string; className: string }) => (
  <span
    className={clsx(
      "pointer-events-none absolute font-['Noto_Sans_CJK_JP',sans-serif] text-[44px] leading-[46px] text-[#f00] [-webkit-text-stroke:6px_#fff] [paint-order:stroke_fill] [filter:drop-shadow(1px_2px_2px_rgba(0,0,0,0.6))]",
      className
    )}
  >
    {mark}
  </span>
);

const ValidationDialog = () => {
  const [checked, setChecked] = useState(true);
  const [style, setStyle] = useState("注意");
  return (
    <div role="dialog" aria-label="データの入力規則" className="absolute top-[271px] left-[620px] w-[400px] border border-[#6a6a6a] bg-[#f0f0f0] text-[11px] text-black shadow-[2px_4px_16px_rgba(0,0,0,0.4)]">
      <div className="flex h-[30px] items-center bg-white pr-[18px] pl-2">
        <h2 className="flex-1">データの入力規則</h2>
        <button type="button" aria-label="ヘルプ" className="mr-[34px] text-[14px]">?</button>
        <button type="button" aria-label="閉じる"><Svg w={11} h={11}><path d="M.5 .5 10.500 10.500M10.500 .5 .5 10.500" stroke="#000" /></Svg></button>
      </div>
      <div role="tablist" className="mt-[10px] ml-2 flex h-[22px] leading-[21px]">
        {dialogTabs.map((tab) => (
          <button
            key={tab.text}
            type="button"
            role="tab"
            className={clsx("flex shrink-0 items-center justify-center border-t border-r border-[#d9d9d9] whitespace-nowrap", tab.width, tab.text === "エラー メッセージ" && "bg-white")}
          >
            {tab.text}
          </button>
        ))}
      </div>
      <div className="mx-1.5 h-[257px] border border-[#dcdcdc] bg-white pr-1.5 pl-2">
        <label className="mt-3 flex h-4 items-center gap-1 whitespace-nowrap">
          <span className="relative flex size-[13px]">
            <input type="checkbox" checked={checked} onChange={(e) => setChecked(e.target.checked)} className="size-[13px] appearance-none border border-[#333] bg-white" />
            {checked && <Svg w={13} h={13} className="pointer-events-none absolute"><path d="M2.500 6.500 5 9.500 10.500 3.500" stroke="#222" /></Svg>}
          </span>
          <span>無効なデータが入力されたらエラー メッセージを表示する(<u>S</u>)</span>
        </label>
        <div className="mt-3.5 flex h-4 items-center gap-1">
          <span className="whitespace-nowrap">無効なデータが入力されたときに表示するエラー メッセージ:</span>
          <span className="h-px flex-1 bg-[#dcdcdc]" />
        </div>
        <div className="mt-1.5 flex">
          <div className="w-[170px] pl-[9px]">
            <label htmlFor="alert-style" className="block leading-[18px]">スタイル(<u>Y</u>):</label>
            <div className="relative mt-0.5 w-[150px]">
              <select id="alert-style" value={style} onChange={(e) => setStyle(e.target.value)} className="block h-6 w-full appearance-none border border-[#adadad] bg-white pl-1">
                <option>停止</option>
                <option>注意</option>
                <option>情報</option>
              </select>
              <span className="pointer-events-none absolute inset-y-px right-px flex w-4 items-center justify-center bg-[#e1e1e1] text-[#555]">
                <Chevron size={10} />
              </span>
            </div>
            <div className="mt-[55px] ml-[60px] flex size-8 items-center justify-center bg-[#f0f0f0]">
              <svg width="32" height="32" viewBox="0 0 32 32" aria-hidden="true">
                <defs>
                  <linearGradient id="warn" x1="0" y1="0" x2="1" y2="1">
                    <stop offset="0" stopColor="#fff36b" />
                    <stop offset="0.500" stopColor="#f7cf10" />
                    <stop offset="1" stopColor="#d99e00" />
                  </linearGradient>
                </defs>
                <path d="M15.500 3.500 30 29.500H1Z" fill="#c9ccd0" stroke="#8f9499" strokeLinejoin="round" />
                <path d="M15.500 7 27 27.500H4Z" fill="url(#warn)" />
                <path d="M14 12H17.500L17 22H14.500Z" fill="#222" />
                <circle cx="15.700" cy="24.800" r="1.800" fill="#222" />
              </svg>
            </div>
          </div>
          <div className="flex-1">
            <label htmlFor="alert-title" className="block leading-[18px]">タイトル(<u>T</u>):</label>
            <input id="alert-title" defaultValue="入力値は正しいですか？" className="mt-px block h-6 w-full border border-[#7a7a7a] bg-white px-1 outline-none" />
            <label htmlFor="alert-text" className="mt-1 block leading-[20px]">エラー メッセージ(<u>E</u>):</label>
            <div className="relative flex h-24 border border-[#7a7a7a] bg-white">
              <textarea id="alert-text" defaultValue={"調整が必要な場合を除いて、進捗は\nリストから選択してください。"} className="min-w-0 flex-1 resize-none overflow-hidden pt-0.5 pl-1 leading-[15px] whitespace-pre outline-none" />
              <span className="absolute top-[17px] left-[140px] h-[15px] w-px bg-black" />
              <div className="my-0.5 mr-px flex w-4 flex-col items-center justify-between bg-[#f0f0f0] py-1 text-[#b5b5b5]">
                <Chevron size={10} className="rotate-180" />
                <Chevron size={10} />
              </div>
            </div>
          </div>
        </div>
      </div>
      <div className="mx-1.5 mt-[9px] mb-2 flex h-[26px]">
        <button type="button" className="w-[88px] border border-[#adadad] bg-[#e1e1e1]">すべてクリア(<u>C</u>)</button>
        <button type="button" className="ml-auto w-[74px] border-2 border-[#005499] bg-[#e1e1e1]">OK</button>
        <button type="button" className="ml-2.5 w-[74px] border border-[#adadad] bg-[#e1e1e1]">キャンセル</button>
      </div>

      <Highlight className="top-[32px] left-[155px] h-[39px] w-[106px]" />
      <Highlight className="top-[140px] left-[14px] h-[39px] w-[148px]" />
      <Highlight className="top-[120px] left-[175px] h-[181px] w-[216px]" />
      <Highlight className="top-[323px] left-[225px] h-[38px] w-[88px]" />
      <Step mark="⑱" className="-top-[22px] left-[186px]" />
      <Step mark="⑲" className="top-[186px] left-[13px]" />
      <Step mark="⑳" className="top-[66px] left-[354px]" />
      <Step mark="㉑" className="top-[319px] left-[323px]" />
    </div>
  );
};

export default function App() {
  return (
    <div className="relative flex h-screen flex-col overflow-hidden border border-[#808080] bg-[#efefef] font-['Noto_Sans','Noto_Sans_CJK_JP',sans-serif] [font-feature-settings:'palt']">
      <TitleBar />
      <TabRow />
      <Ribbon />
      <FormulaBar />
      <Sheet />
      <SheetBar />
      <StatusBar />
      <ValidationDialog />
    </div>
  );
}
